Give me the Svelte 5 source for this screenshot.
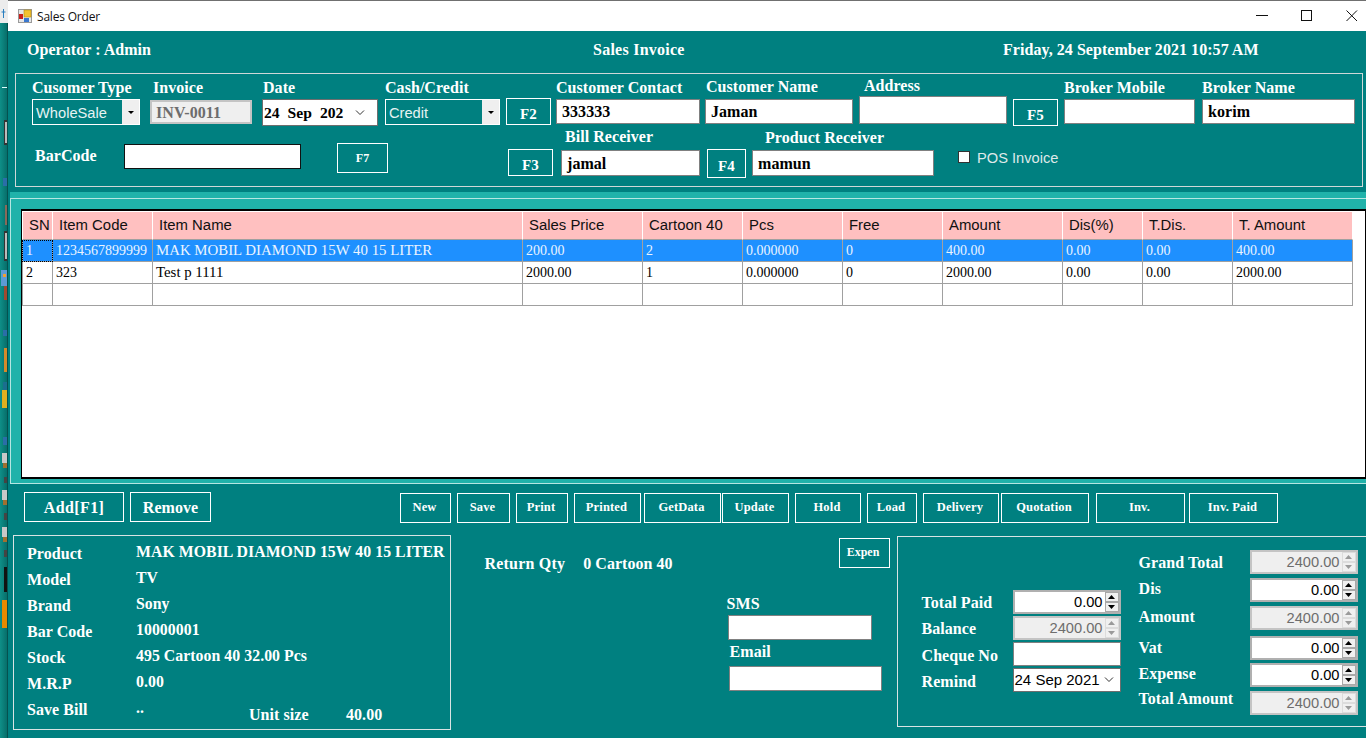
<script>
  const row1 = [
    { label: 'Cusomer Type', x: 16, w: 108, h: 26, kind: 'combo', value: 'WholeSale', lx: 0, lg: 4, bb: 1 },
    { label: 'Invoice', x: 10, w: 102, h: 24, kind: 'off', value: 'INV-0011', lx: 3, lg: 5, bb: 2 },
    { label: 'Date', x: 10, w: 116, h: 27, kind: 'date', value: '24  Sep  202', lx: 1, lg: 4, bb: 0 },
    { label: 'Cash/Credit', x: 7, w: 115, h: 26, kind: 'combo', value: 'Credit', lx: 0, lg: 4, bb: 1 },
    { label: '', x: 6, w: 45, h: 27, kind: 'btn', value: 'F2', lx: 0, lg: 0, bb: 1 },
    { label: 'Customer Contact', x: 5, w: 144, h: 25, kind: 'text', value: '333333', lx: 0, lg: 4, bb: 2 },
    { label: 'Customer Name', x: 5, w: 148, h: 25, kind: 'text', value: 'Jaman', lx: 1, lg: 5, bb: 2 },
    { label: 'Address', x: 6, w: 148, h: 28, kind: 'text', value: '', lx: 5, lg: 3, bb: 2 },
    { label: '', x: 6, w: 45, h: 27, kind: 'btn', value: 'F5', lx: 0, lg: 0, bb: 0 },
    { label: 'Broker Mobile', x: 6, w: 131, h: 25, kind: 'text', value: '', lx: 0, lg: 4, bb: 2 },
    { label: 'Broker Name', x: 7, w: 153, h: 25, kind: 'text', value: 'korim', lx: 0, lg: 4, bb: 2 }
  ];

  const columns = ['SN', 'Item Code', 'Item Name', 'Sales Price', 'Cartoon 40', 'Pcs', 'Free', 'Amount', 'Dis(%)', 'T.Dis.', 'T. Amount'];
  const widths = [31, 100, 370, 120, 100, 100, 100, 120, 80, 90, 120];
  const rows = [
    ['1', '1234567899999', 'MAK MOBIL DIAMOND 15W 40 15 LITER', '200.00', '2', '0.000000', '0', '400.00', '0.00', '0.00', '400.00'],
    ['2', '323', 'Test p 1111', '2000.00', '1', '0.000000', '0', '2000.00', '0.00', '0.00', '2000.00'],
    ['', '', '', '', '', '', '', '', '', '', '']
  ];

  const actions = [
    { t: 'New', x: 189, w: 51 }, { t: 'Save', x: 6, w: 53 }, { t: 'Print', x: 6, w: 52 },
    { t: 'Printed', x: 6, w: 67 }, { t: 'GetData', x: 3, w: 77 }, { t: 'Update', x: 1, w: 67 },
    { t: 'Hold', x: 6, w: 66 }, { t: 'Load', x: 6, w: 50 }, { t: 'Delivery', x: 6, w: 76 },
    { t: 'Quotation', x: 2, w: 88 }, { t: 'Inv.', x: 7, w: 89 }, { t: 'Inv. Paid', x: 4, w: 89 }
  ];

  const product = [
    ['Product', 'MAK MOBIL DIAMOND 15W 40 15 LITER'],
    ['Model', 'TV'],
    ['Brand', 'Sony'],
    ['Bar Code', '10000001'],
    ['Stock', '495 Cartoon 40 32.00 Pcs'],
    ['M.R.P', '0.00']
  ];

  const payLeft = [
    { l: 'Total Paid', v: '0.00', kind: 'spin', g: 2, lo: 0 },
    { l: 'Balance', v: '2400.00', kind: 'spinoff', g: 2, lo: 0 },
    { l: 'Cheque No', v: '', kind: 'text', g: 2, lo: 1 },
    { l: 'Remind', v: '24 Sep 2021', kind: 'date', g: 0, lo: 1 }
  ];
  const payRight = [
    { l: 'Grand Total', v: '2400.00', kind: 'spinoff', g: 4, lo: 0 },
    { l: 'Dis', v: '0.00', kind: 'spin', g: 4, lo: -2 },
    { l: 'Amount', v: '2400.00', kind: 'spinoff', g: 6, lo: -2 },
    { l: 'Vat', v: '0.00', kind: 'spin', g: 3, lo: -1 },
    { l: 'Expense', v: '0.00', kind: 'spin', g: 4, lo: -2 },
    { l: 'Total Amount', v: '2400.00', kind: 'spinoff', g: 0, lo: -5 }
  ];

  const strip = [
    [2, 87, 5, 1, '#dff'], [4, 120, 4, 25, '#333'], [5, 122, 2, 21, '#bbb'], [3, 178, 4, 8, '#2a6ea8'],
    [5, 205, 3, 20, '#8a6a5a'], [4, 231, 4, 30, '#333'], [5, 233, 2, 26, '#bbb'], [1, 270, 6, 16, '#5b9bd5'],
    [3, 274, 3, 3, '#f0a030'], [4, 286, 3, 14, '#a04a30'], [3, 330, 4, 6, '#2a6ea8'], [4, 348, 3, 24, '#d58a2a'],
    [3, 382, 5, 8, '#1b6f8f'], [2, 390, 6, 18, '#e0b020'], [3, 437, 4, 8, '#2a6ea8'], [2, 453, 5, 10, '#c8c8c8'],
    [3, 463, 4, 5, '#a07030'], [4, 477, 3, 6, '#444'], [2, 490, 5, 10, '#c8c8c8'], [3, 500, 4, 5, '#a07030'],
    [4, 513, 3, 7, '#444'], [2, 527, 5, 10, '#c8c8c8'], [3, 537, 4, 5, '#a07030'], [4, 550, 3, 7, '#444'],
    [4, 567, 3, 25, '#111'], [2, 600, 5, 28, '#e88a00']
  ];
</script>

{#snippet spinBox(v, off)}
  <div class="spin" class:off>
    <span class="spinval">{v}</span>
    <span class="arrows">
      <span class="arrow"><svg width="7" height="4" viewBox="0 0 7 4"><path d="M3.5 0 7 4H0z" /></svg></span>
      <span class="arrow"><svg width="7" height="4" viewBox="0 0 7 4"><path d="M0 0h7L3.5 4z" /></svg></span>
    </span>
  </div>
{/snippet}

{#snippet chevron()}
  <svg class="chev" width="10" height="6" viewBox="0 0 10 6"><path d="M1 .5 5 4.5 9 .5" fill="none" stroke="#333" /></svg>
{/snippet}

<div class="screen">
  <svg class="strip" width="8" height="738" viewBox="0 0 8 738" aria-hidden="true">
    <defs>
      <linearGradient id="desk" x1="0" x2="1" y1="0" y2="0">
        <stop offset="0" stop-color="#0f8f88" /><stop offset="1" stop-color="#066a66" />
      </linearGradient>
    </defs>
    <rect width="8" height="738" fill="url(#desk)" />
    <rect width="8" height="23" fill="#ececec" />
    <path d="M3.5 9v9M1.5 12h4" stroke="#2a7fc0" fill="none" />
    {#each strip as [x, y, w, h, c]}
      <rect {x} {y} width={w} height={h} fill={c} />
    {/each}
    <rect x="7" width="1" y="23" height="715" fill="#04524f" />
  </svg>

  <div class="window">
    <header class="titlebar">
      <svg class="appicon" width="14" height="14" viewBox="0 0 14 14" aria-hidden="true">
        <rect x=".5" y=".5" width="13" height="13" fill="#e6e6e6" stroke="#9a9a9a" />
        <rect x="1" y="5" width="4" height="5" fill="#c8201c" />
        <rect x="6" y="1" width="7" height="7" fill="#f2c230" stroke="#b58a10" stroke-width=".6" />
        <rect x="6" y="9" width="5" height="4" fill="#3a78d0" />
      </svg>
      <span class="wintitle">Sales Order</span>
      <span class="controls">
        <svg width="12" height="12" viewBox="0 0 12 12"><path d="M0 5.5h12" stroke="#111" /></svg>
        <svg width="12" height="12" viewBox="0 0 12 12"><rect x=".5" y=".5" width="10" height="10" fill="none" stroke="#111" /></svg>
        <svg width="12" height="12" viewBox="0 0 12 12"><path d="M.5 .5l10.5 10.5M11 .5 .5 11" stroke="#111" fill="none" /></svg>
      </span>
    </header>

    <div class="topline">
      <span class="tl-a">Operator : Admin</span>
      <span class="tl-b"><span class="tl-title">Sales Invoice</span></span>
      <span>Friday, 24 September 2021 10:57 AM</span>
    </div>

    <section class="toppanel">
      <div class="row1">
        {#each row1 as f}
          <div class="field" style:margin-left="{f.x}px" style:width="{f.w}px" style:margin-bottom="{f.bb}px">
            {#if f.label}
              <span class="lbl" style:margin-left="{f.lx}px" style:margin-bottom="{f.lg}px">{f.label}</span>
            {/if}
            {#if f.kind === 'combo'}
              <div class="combo" style:height="{f.h}px">
                <span class="comboval">{f.value}</span>
                <span class="combobtn"><svg width="6" height="3" viewBox="0 0 6 3"><path d="M0 0h6L3 3z" /></svg></span>
              </div>
            {:else if f.kind === 'off'}
              <div class="tb off" style:height="{f.h}px">{f.value}</div>
            {:else if f.kind === 'date'}
              <div class="tb datebox" style:height="{f.h}px"><span class="dateval">{f.value}</span>{@render chevron()}</div>
            {:else if f.kind === 'btn'}
              <button class="btn fkey" style:height="{f.h}px">{f.value}</button>
            {:else}
              <div class="tb" style:height="{f.h}px">{f.value}</div>
            {/if}
          </div>
        {/each}
      </div>
      <div class="row2">
        <span class="lbl bar">BarCode</span>
        <div class="tb barbox"></div>
        <button class="btn f7">F7</button>
        <button class="btn fkey f3">F3</button>
        <div class="field billf">
          <span class="lbl billl">Bill Receiver</span>
          <div class="tb billb">jamal</div>
        </div>
        <button class="btn fkey f4">F4</button>
        <div class="field prodf">
          <span class="lbl prodl">Product Receiver</span>
          <div class="tb prodb">mamun</div>
        </div>
        <span class="check"></span>
        <span class="pos">POS Invoice</span>
      </div>
    </section>

    <div class="band">
      <div class="gridpanel">
        <div class="gridbox">
          <table>
            <colgroup>
              {#each widths as w}<col style:width="{w}px" />{/each}
            </colgroup>
            <thead>
              <tr>{#each columns as c}<th>{c}</th>{/each}</tr>
            </thead>
            <tbody>
              {#each rows as r, i}
                <tr class:sel={i === 0}>
                  {#each r as c, j}<td class:focus={i === 0 && j === 0} class:name={j === 2}>{c}</td>{/each}
                </tr>
              {/each}
            </tbody>
          </table>
        </div>
      </div>
    </div>

    <div class="actions">
      <button class="btn big add">Add[F1]</button>
      <button class="btn big remove">Remove</button>
      {#each actions as a}
        <button class="btn small" style:margin-left="{a.x}px" style:width="{a.w}px">{a.t}</button>
      {/each}
    </div>

    <div class="bottom">
      <section class="prodpanel">
        {#each product as [l, v]}
          <div class="prow"><span class="plabel">{l}</span><span class="pval">{v}</span></div>
        {/each}
        <div class="prow">
          <span class="plabel lastl">Save Bill</span>
          <span class="pval lastv">..</span>
          <span class="unit">Unit size</span>
          <span class="unitv">40.00</span>
        </div>
      </section>

      <section class="mid">
        <div class="midtop">
          <span class="lbl ret">Return Qty</span>
          <span class="lbl retv">0 Cartoon 40</span>
          <button class="btn small expen">Expen</button>
        </div>
        <span class="lbl sms">SMS</span>
        <div class="tb smsb"></div>
        <span class="lbl email">Email</span>
        <div class="tb emailb"></div>
      </section>

      <section class="pay">
        <div class="paycol payl">
          {#each payLeft as p}
            <div class="payrow" style:margin-bottom="{p.g}px">
              <span class="lbl paylbl" style:margin-top="{p.lo * 2}px">{p.l}</span>
              {#if p.kind === 'spin'}{@render spinBox(p.v, false)}
              {:else if p.kind === 'spinoff'}{@render spinBox(p.v, true)}
              {:else if p.kind === 'date'}
                <div class="tb remind"><span>{p.v}</span>{@render chevron()}</div>
              {:else}<div class="tb cheque"></div>{/if}
            </div>
          {/each}
        </div>
        <div class="paycol payr">
          {#each payRight as p}
            <div class="payrow rr" style:margin-bottom="{p.g}px">
              <span class="lbl paylbl2" style:margin-top="{p.lo * 2}px">{p.l}</span>
              {@render spinBox(p.v, p.kind === 'spinoff')}
            </div>
          {/each}
        </div>
      </section>
    </div>
  </div>
</div>

<style>
  :global(body) { margin: 0; background: #008080; overflow: hidden; }
  .screen { display: flex; width: 1366px; height: 738px; overflow: hidden; }
  .strip { flex: none; display: block; }
  .window {
    width: 1358px; height: 738px; background: #008080; color: #fff;
    font: bold 16px/18px "Liberation Serif", serif; letter-spacing: .05px;
    display: flex; flex-direction: column;
  }
  .titlebar {
    flex: none; height: 30px; background: #fff; border-top: 1px solid #707070;
    display: flex; align-items: center; color: #111; letter-spacing: 0;
  }
  .appicon { margin-left: 10px; }
  .wintitle { margin-left: 5px; font: 12px "Open Sans", sans-serif; letter-spacing: -.2px; }
  .controls { margin-left: auto; display: flex; gap: 33px; margin-right: 8px; margin-top: -1px; }

  .topline { flex: none; height: 42px; display: flex; align-items: center; padding-bottom: 4px; box-sizing: border-box; padding-left: 19px; }
  .tl-a { width: 566px; }
  .tl-b { width: 410px; }
  .tl-title { letter-spacing: .25px; }

  .toppanel {
    flex: none; box-sizing: border-box; width: 1348px; height: 114px; margin-left: 7px;
    border: 1px solid #cfd8d8;
  }
  .row1 { display: flex; height: 52px; align-items: flex-end; }
  .field { display: flex; flex-direction: column; flex: none; }
  .lbl { display: block; white-space: nowrap; height: 16px; }

  .tb {
    box-sizing: border-box; background: #fff; border: 1px solid #808080; color: #000;
    padding: 1px 5px 0; display: flex; align-items: center; white-space: nowrap; overflow: hidden;
  }
  .tb.off { background: #efefef; color: #6d6d6d; border: 2px solid #c4c4c4; padding-left: 4px; }
  .datebox { padding: 0 12px 0 1px; justify-content: space-between; border-color: #6e6e6e; }
  .dateval { white-space: pre; font-size: 15.6px; }
  .chev { flex: none; }

  .combo { box-sizing: border-box; border: 1px solid #fff; display: flex; align-items: center; }
  .comboval { flex: 1; font: 14.67px "Liberation Sans", sans-serif; letter-spacing: 0; padding: 1px 0 0 3px; color: #e6f3f3; }
  .combobtn { width: 17px; align-self: stretch; background: #efefef; display: flex; align-items: center; justify-content: center; }

  .btn {
    box-sizing: border-box; background: transparent; border: 1px solid #fff; color: #fff; padding: 0;
    font: inherit; letter-spacing: inherit;
  }
  .fkey { width: 45px; padding-top: 5px; font-size: 15px; }
  .row2 { display: flex; align-items: flex-start; height: 60px; }
  .bar { margin-left: 19px; margin-top: 21px; width: 89px; }
  .barbox { width: 177px; height: 25px; margin-top: 18px; border-color: #111; }
  .f7 { width: 51px; height: 30px; margin-left: 36px; margin-top: 17px; font-size: 12px; }
  .f3 { height: 27px; margin-left: 120px; margin-top: 23px; }
  .billf { margin-left: 8px; margin-top: 2px; width: 139px; }
  .billl { margin-left: 4px; margin-bottom: 6px; }
  .billb { height: 26px; }
  .f4 { width: 39px; height: 29px; margin-left: 7px; margin-top: 23px; }
  .prodf { margin-left: 6px; margin-top: 3px; width: 182px; }
  .prodl { margin-left: 13px; margin-bottom: 5px; }
  .prodb { height: 26px; }
  .check { width: 12px; height: 12px; box-sizing: border-box; border: 1px solid #333; background: #fff; margin-left: 24px; margin-top: 25px; }
  .pos { margin-left: 7px; margin-top: 24px; font: 14.67px/16px "Liberation Sans", sans-serif; letter-spacing: 0; color: #dfe9e9; }

  .band { flex: none; margin: 5px 0 0 2px; padding-top: 6px; background: #20b2aa; width: 1356px; }
  .gridpanel {
    box-sizing: border-box; height: 286px; background: #20b2aa;
    border: 1px solid #b5e6e2; border-right: 0; padding: 10px 0 4px 10px;
  }
  .gridbox {
    box-sizing: border-box; height: 270px; background: #fff;
    border: 1px solid #000; border-width: 2px 1px 2px 1px; padding: 1px 0 0 0;
  }
  table { border-collapse: separate; border-spacing: 0; table-layout: fixed; width: 1331px; letter-spacing: 0; }
  th {
    padding: 0 0 2px 6px; background: #ffc0c0; color: #111; text-align: left;
    font: 14.9px "Liberation Sans", sans-serif; border-right: 1px solid #fff; border-bottom: 1px solid #a0a0a0;
    overflow: hidden; white-space: nowrap; box-sizing: border-box; height: 28px;
  }
  th:first-child { padding-left: 6px; border-left: 1px solid #fff; }
  td {
    box-sizing: border-box; height: 22px; padding: 0 0 0 3px; color: #000; white-space: nowrap; overflow: hidden;
    font: 14px "Liberation Serif", serif; border-right: 1px solid #a0a0a0; border-bottom: 1px solid #a0a0a0;
  }
  td.name { font-size: 14.85px; }
  td:first-child { border-left: 1px solid #a0a0a0; }
  .sel td { background: #1e90ff; color: #eaf4ff; }
  td.focus { outline: 1px dotted #000; outline-offset: -1px; }

  .actions { flex: none; display: flex; align-items: flex-start; height: 51px; padding: 8px 0 0 16px; box-sizing: border-box; }
  .big { height: 30px; padding-top: 1px; }
  .add { width: 100px; letter-spacing: .4px; }
  .remove { width: 81px; margin-left: 6px; }
  .small { height: 30px; margin-top: 1px; padding: 0 2px 2px 0; font-size: 12.5px; letter-spacing: .15px; }

  .bottom { flex: 1; display: flex; align-items: flex-start; }
  .prodpanel {
    box-sizing: border-box; width: 438px; height: 195px; margin-left: 5px; border: 1px solid #d8e4e4;
    padding: 9px 0 0 13px;
  }
  .prow { display: flex; height: 26px; align-items: flex-start; white-space: nowrap; }
  .plabel { width: 109px; flex: none; }
  .pval { margin-top: -2px; font-size: 15.8px; letter-spacing: .05px; }
  .unit { margin-top: 5px; margin-left: 105px; width: 97px; }
  .unitv { margin-top: 5px; }

  .mid { width: 446px; flex: none; }
  .midtop { display: flex; align-items: flex-start; height: 60px; }
  .ret { margin-left: 34px; margin-top: 20px; letter-spacing: .2px; }
  .retv { margin-left: 18px; margin-top: 20px; }
  .expen { width: 51px; margin-left: auto; margin-right: 7px; margin-top: 3px; letter-spacing: 0; font-size: 12px; }
  .sms { margin-left: 276px; margin-bottom: 4px; }
  .smsb { width: 144px; height: 25px; margin-left: 277px; }
  .email { margin-left: 279px; margin-top: 3px; margin-bottom: 7px; }
  .emailb { width: 153px; height: 25px; margin-left: 278px; }

  .pay {
    box-sizing: border-box; width: 470px; height: 191px; border: 1px solid #d8e4e4; border-right: 0;
    margin-top: 1px; display: flex; align-items: flex-start;
  }
  .paycol { flex: none; }
  .payl { margin-left: 24px; margin-top: 53px; width: 214px; }
  .payr { margin-left: 3px; margin-top: 13px; }
  .payrow { display: flex; align-items: center; }
  .paylbl { width: 91px; flex: none; }
  .paylbl2 { width: 111px; flex: none; }

  .spin {
    box-sizing: border-box; width: 108px; height: 24px; background: #fff; border: 2px solid #b0b0b0;
    display: flex; align-items: center; flex: none; color: #000;
    font: 14.67px "Liberation Sans", sans-serif; letter-spacing: 0;
  }
  .spin.off { background: #efefef; color: #6d6d6d; border-color: #c4c4c4; }
  .spinval { flex: 1; text-align: right; padding: 0 2px 1px 0; }
  .arrows { width: 14px; align-self: stretch; display: flex; flex-direction: column; flex: none; }
  .arrow {
    flex: 1; display: flex; align-items: center; justify-content: center; box-sizing: border-box;
    background: #f0f0f0; border: 1px solid #a8a8a8;
  }
  .off .arrow { border-color: #dcdcdc; }
  .off .arrow path { fill: #9a9a9a; }
  .cheque { width: 108px; height: 24px; }
  .remind {
    width: 108px; height: 24px; padding: 0 6px 1px 1px; justify-content: space-between;
    font: 15px "Liberation Sans", sans-serif; letter-spacing: 0; border-color: #6e6e6e;
  }
</style>
